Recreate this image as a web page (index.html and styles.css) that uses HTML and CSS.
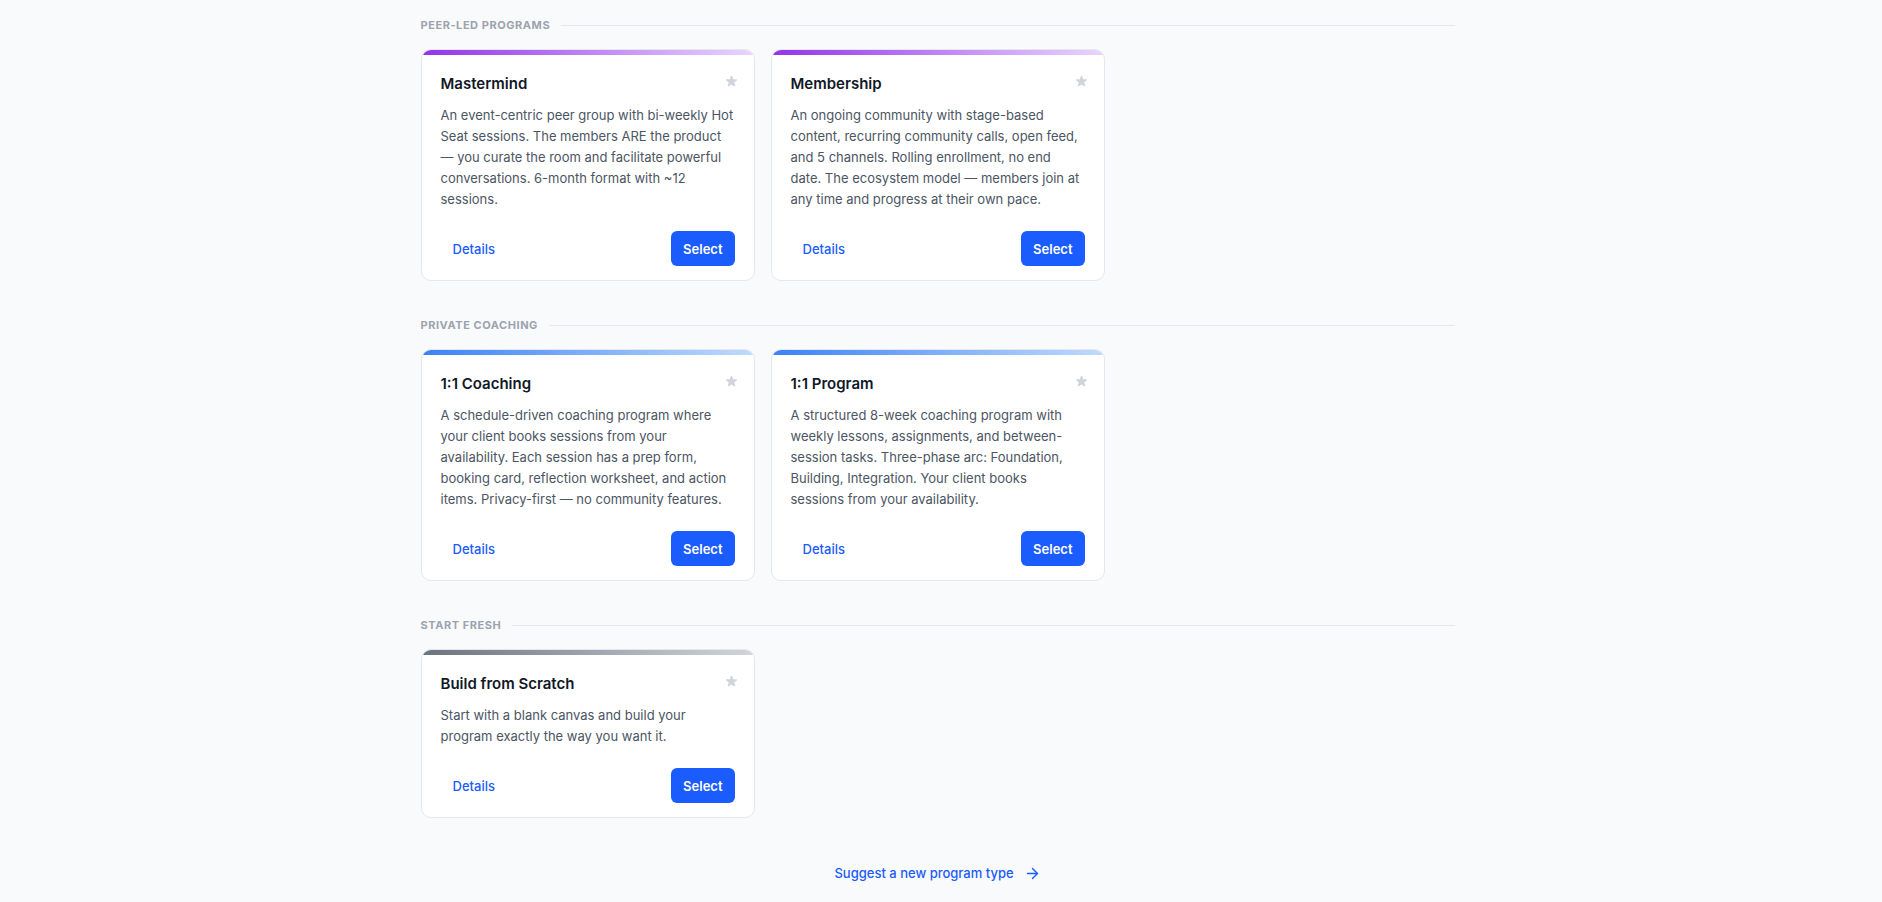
FILE: index.html
```html
<!DOCTYPE html>
<html lang="en">
<head>
  <meta charset="UTF-8">
  <title>Choose a program type</title>
  <link rel="stylesheet" href="styles.css">
</head>
<body>
<div class="page">
  <div class="wrap">

    <div class="section">
      <div class="section-head"><span>Peer-led programs</span><div class="rule"></div></div>
      <div class="grid">
        <div class="card purple">
          <div class="bar"></div>
          <svg class="star" viewBox="0 0 20 20"><path d="M9.049 2.927c.3-.921 1.603-.921 1.902 0l1.07 3.292a1 1 0 00.95.69h3.462c.969 0 1.371 1.24.588 1.81l-2.8 2.034a1 1 0 00-.364 1.118l1.07 3.292c.3.921-.755 1.688-1.54 1.118l-2.8-2.034a1 1 0 00-1.175 0l-2.8 2.034c-.784.57-1.838-.197-1.539-1.118l1.07-3.292a1 1 0 00-.364-1.118L2.98 8.72c-.783-.57-.38-1.81.588-1.81h3.461a1 1 0 00.951-.69l1.07-3.292z"/></svg>
          <div class="card-body">
            <h3>Mastermind</h3>
            <p>An event-centric peer group with bi-weekly Hot Seat sessions. The members ARE the product — you curate the room and facilitate powerful conversations. 6-month format with ~12 sessions.</p>
            <div class="card-foot">
              <button class="btn-link">Details</button>
              <button class="btn-select">Select</button>
            </div>
          </div>
        </div>
        <div class="card purple">
          <div class="bar"></div>
          <svg class="star" viewBox="0 0 20 20"><path d="M9.049 2.927c.3-.921 1.603-.921 1.902 0l1.07 3.292a1 1 0 00.95.69h3.462c.969 0 1.371 1.24.588 1.81l-2.8 2.034a1 1 0 00-.364 1.118l1.07 3.292c.3.921-.755 1.688-1.54 1.118l-2.8-2.034a1 1 0 00-1.175 0l-2.8 2.034c-.784.57-1.838-.197-1.539-1.118l1.07-3.292a1 1 0 00-.364-1.118L2.98 8.72c-.783-.57-.38-1.81.588-1.81h3.461a1 1 0 00.951-.69l1.07-3.292z"/></svg>
          <div class="card-body">
            <h3>Membership</h3>
            <p>An ongoing community with stage-based content, recurring community calls, open feed, and 5 channels. Rolling enrollment, no end date. The ecosystem model — members join at any time and progress at their own pace.</p>
            <div class="card-foot">
              <button class="btn-link">Details</button>
              <button class="btn-select">Select</button>
            </div>
          </div>
        </div>
      </div>
    </div>

    <div class="section">
      <div class="section-head"><span>Private coaching</span><div class="rule"></div></div>
      <div class="grid">
        <div class="card blue">
          <div class="bar"></div>
          <svg class="star" viewBox="0 0 20 20"><path d="M9.049 2.927c.3-.921 1.603-.921 1.902 0l1.07 3.292a1 1 0 00.95.69h3.462c.969 0 1.371 1.24.588 1.81l-2.8 2.034a1 1 0 00-.364 1.118l1.07 3.292c.3.921-.755 1.688-1.54 1.118l-2.8-2.034a1 1 0 00-1.175 0l-2.8 2.034c-.784.57-1.838-.197-1.539-1.118l1.07-3.292a1 1 0 00-.364-1.118L2.98 8.72c-.783-.57-.38-1.81.588-1.81h3.461a1 1 0 00.951-.69l1.070-3.292z"/></svg>
          <div class="card-body">
            <h3>1:1 Coaching</h3>
            <p>A schedule-driven coaching program where your client books sessions from your availability. Each session has a prep form, booking card, reflection worksheet, and action items. Privacy-first — no community features.</p>
            <div class="card-foot">
              <button class="btn-link">Details</button>
              <button class="btn-select">Select</button>
            </div>
          </div>
        </div>
        <div class="card blue">
          <div class="bar"></div>
          <svg class="star" viewBox="0 0 20 20"><path d="M9.049 2.927c.3-.921 1.603-.921 1.902 0l1.07 3.292a1 1 0 00.95.69h3.462c.969 0 1.371 1.24.588 1.81l-2.8 2.034a1 1 0 00-.364 1.118l1.07 3.292c.3.921-.755 1.688-1.54 1.118l-2.8-2.034a1 1 0 00-1.175 0l-2.8 2.034c-.784.57-1.838-.197-1.539-1.118l1.07-3.292a1 1 0 00-.364-1.118L2.98 8.72c-.783-.57-.38-1.81.588-1.81h3.461a1 1 0 00.951-.69l1.07-3.292z"/></svg>
          <div class="card-body">
            <h3>1:1 Program</h3>
            <p>A structured 8-week coaching program with weekly lessons, assignments, and between-session tasks. Three-phase arc: Foundation, Building, Integration. Your client books sessions from your availability.</p>
            <div class="card-foot">
              <button class="btn-link">Details</button>
              <button class="btn-select">Select</button>
            </div>
          </div>
        </div>
      </div>
    </div>

    <div class="section">
      <div class="section-head"><span>Start fresh</span><div class="rule"></div></div>
      <div class="grid">
        <div class="card grey">
          <div class="bar"></div>
          <svg class="star" viewBox="0 0 20 20"><path d="M9.049 2.927c.3-.921 1.603-.921 1.902 0l1.07 3.292a1 1 0 00.95.69h3.462c.969 0 1.371 1.24.588 1.81l-2.8 2.034a1 1 0 00-.364 1.118l1.07 3.292c.3.921-.755 1.688-1.54 1.118l-2.8-2.034a1 1 0 00-1.175 0l-2.8 2.034c-.784.57-1.838-.197-1.539-1.118l1.07-3.292a1 1 0 00-.364-1.118L2.98 8.72c-.783-.57-.38-1.81.588-1.81h3.461a1 1 0 00.951-.69l1.07-3.292z"/></svg>
          <div class="card-body">
            <h3>Build from Scratch</h3>
            <p>Start with a blank canvas and build your program exactly the way you want it.</p>
            <div class="card-foot">
              <button class="btn-link">Details</button>
              <button class="btn-select">Select</button>
            </div>
          </div>
        </div>
      </div>
    </div>

    <div class="suggest">
      <a href="#">Suggest a new program type
        <svg width="17" height="17" viewBox="0 0 24 24" fill="none" stroke="currentColor" stroke-width="2" stroke-linecap="round" stroke-linejoin="round"><path d="M5 12h14"/><path d="M12 5l7 7-7 7"/></svg>
      </a>
    </div>

  </div>
</div>
</body>
</html>
```

FILE: styles.css
```css
body {
  margin: 0;
  background: #f9fafb;
  font-family: Inter, "Noto Sans", sans-serif;
  color: #111827;
}

.page {
  padding: 17px 7px 0 0;
}

.wrap {
  width: 1034px;
  margin: 0 auto;
}

.section {
  margin-bottom: 36px;
}

.section-head {
  display: flex;
  align-items: center;
  gap: 11px;
  margin-bottom: 16px;
  height: 16px;
}

.section-head span {
  font-size: 11px;
  font-weight: 700;
  letter-spacing: 0.05em;
  text-transform: uppercase;
  color: #9ca3af;
  white-space: nowrap;
}

.rule {
  flex: 1;
  height: 1px;
  background: #e5e7eb;
}

.grid {
  display: grid;
  grid-template-columns: repeat(3, 1fr);
  gap: 16px;
}

.card {
  position: relative;
  background: #fff;
  border: 1px solid #e5e7eb;
  border-radius: 10px;
  overflow: hidden;
  display: flex;
  flex-direction: column;
}

.bar {
  height: 5px;
}

.purple .bar {
  background: linear-gradient(90deg, #9333ea, #e9d5ff);
}

.blue .bar {
  background: linear-gradient(90deg, #3b82f6, #bfdbfe);
}

.grey .bar {
  background: linear-gradient(90deg, #6b7280, #d1d5db);
}

.star {
  position: absolute;
  top: 24px;
  right: 15px;
  width: 15px;
  height: 15px;
  fill: #d1d5db;
}

.card-body {
  flex: 1;
  display: flex;
  flex-direction: column;
  padding: 19px 20px 14px 19px;
}

.card-body h3 {
  margin: 0 0 11px;
  font-size: 15px;
  line-height: 20px;
  font-weight: 600;
  color: #111827;
}

.card-body p {
  flex: 1;
  margin: 0;
  font-size: 13px;
  line-height: 21px;
  color: #4b5563;
}

.card-foot {
  display: flex;
  justify-content: space-between;
  align-items: center;
  margin-top: 21px;
  margin-right: -1px;
}

.btn-link {
  background: none;
  border: none;
  padding: 0 12px;
  height: 35px;
  font-family: inherit;
  font-size: 13px;
  font-weight: 500;
  color: #1a5cff;
  cursor: pointer;
}

.btn-select {
  background: #1a5cff;
  color: #fff;
  border: none;
  border-radius: 6px;
  height: 35px;
  padding: 0 12px;
  font-family: inherit;
  font-size: 13px;
  font-weight: 600;
  cursor: pointer;
}

.suggest {
  text-align: center;
  margin-top: 44px;
}

.suggest a {
  display: inline-flex;
  align-items: center;
  gap: 10px;
  font-size: 13px;
  font-weight: 500;
  color: #1a5cff;
  text-decoration: none;
}
```
